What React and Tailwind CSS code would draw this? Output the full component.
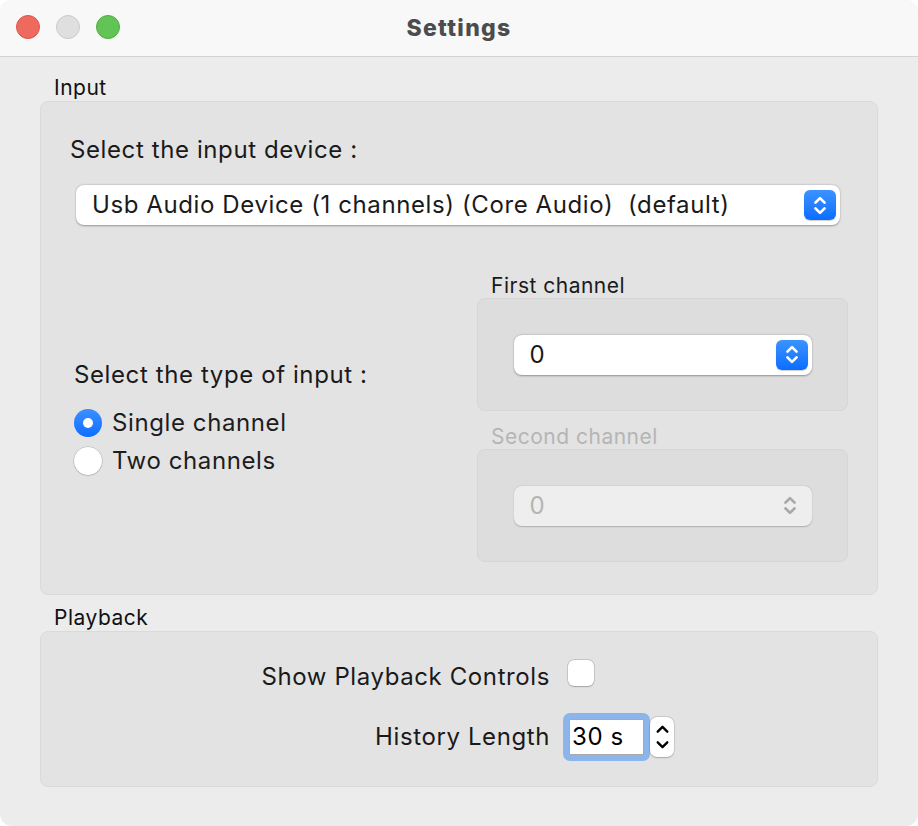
import { useState } from 'react'

const font = { fontFamily: 'Inter, "Noto Sans", sans-serif' }

function Chevrons({ className = '' }) {
  return (
    <svg viewBox="0 0 14 22" className={className} fill="none" stroke="currentColor" strokeWidth="2.4" strokeLinecap="round" strokeLinejoin="round">
      <path d="M3 8.5 L7 4.5 L11 8.5" />
      <path d="M3 13.5 L7 17.5 L11 13.5" />
    </svg>
  )
}

function PopUp({ value, width, disabled = false }) {
  if (disabled) {
    return (
      <div className={`flex h-[40px] ${width} items-center justify-between rounded-[8px] bg-[#eeeeee] pl-[16px] pr-[6px] shadow-[0_0.5px_1.5px_rgba(0,0,0,0.22)]`}>
        <span className="text-[24px] tracking-[0.6px] text-[#b4b4b4]">{value}</span>
        <div className="flex h-[30px] w-[32px] items-center justify-center text-[#a8a8a8]">
          <Chevrons className="h-[25px] w-[16px]" />
        </div>
      </div>
    )
  }
  return (
    <div className={`flex h-[40px] ${width} items-center justify-between rounded-[8px] bg-white pl-[16px] pr-[4px] shadow-[0_0.5px_2px_rgba(0,0,0,0.35)]`}>
      <span className="whitespace-pre text-[24px] tracking-[0.6px] text-[#1a1a1a]">{value}</span>
      <div className="flex h-[30px] w-[32px] items-center justify-center rounded-[6px] bg-gradient-to-b from-[#3b93ff] to-[#0a6dff] text-white shadow-[0_0.5px_1px_rgba(0,0,0,0.2)]">
        <Chevrons className="h-[25px] w-[16px]" />
      </div>
    </div>
  )
}

function Radio({ checked, label, onClick }) {
  return (
    <button type="button" onClick={onClick} className="flex h-[38px] items-center gap-[10px] text-left">
      {checked ? (
        <span className="flex h-[28px] w-[28px] items-center justify-center rounded-full bg-gradient-to-b from-[#3a90ff] to-[#0a6dff]">
          <span className="h-[10px] w-[10px] rounded-full bg-white" />
        </span>
      ) : (
        <span className="h-[28px] w-[28px] rounded-full bg-white shadow-[0_0_0_0.5px_rgba(0,0,0,0.18),0_0.5px_1.5px_rgba(0,0,0,0.2)]" />
      )}
      <span className="text-[24px] tracking-[0.6px] text-[#1d1d1d]">{label}</span>
    </button>
  )
}

function ChannelBox({ label, value, disabled }) {
  return (
    <div>
      <div className={`pl-[14px] text-[21px] leading-[24px] tracking-[0.5px] ${disabled ? 'text-[#b5b5b5]' : 'text-[#1a1a1a]'}`}>{label}</div>
      <div className="flex h-[113px] items-center justify-center rounded-[8px] border border-[#d6d6d6] bg-[#dddddd]">
        <PopUp value={value} width="w-[298px]" disabled={disabled} />
      </div>
    </div>
  )
}

export default function App() {
  const [mode, setMode] = useState('single')

  return (
    <div className="h-[826px] w-[918px] bg-white" style={font}>
      <div className="flex h-full w-full flex-col overflow-hidden rounded-[12px] bg-[#ececec]">
        <div className="relative flex h-[57px] shrink-0 items-center justify-center border-b border-[#d2d2d2] bg-[#f7f8f7]">
          <div className="absolute left-[16px] top-[15px] flex gap-[16px]">
            <span className="h-[24px] w-[24px] rounded-full border border-[#dc5448] bg-[#ee6a5f]" />
            <span className="h-[24px] w-[24px] rounded-full border border-[#c9c9c9] bg-[#dedfde]" />
            <span className="h-[24px] w-[24px] rounded-full border border-[#4fae42] bg-[#61c454]" />
          </div>
          <span className="text-[23px] font-extrabold tracking-[1.3px] text-[#4c4c4c]">Settings</span>
        </div>

        <div className="px-[40px] pt-[18px]">
          <div className="pl-[14px] text-[21px] leading-[26px] tracking-[0.5px] text-[#111]">Input</div>
          <div className="h-[494px] rounded-[8px] border border-[#dadada] bg-[#e3e3e3]">
            <div className="pl-[29px] pt-[33px] text-[24px] leading-[30px] tracking-[0.6px] text-[#1a1a1a]">Select the input device :</div>
            <div className="mt-[20px] pl-[35px]">
              <PopUp value="Usb Audio Device (1 channels) (Core Audio)  (default)" width="w-[764px]" />
            </div>
            <div className="mt-[49px] flex items-start pr-[29px]">
              <div className="flex-1 pl-[33px] pt-[86px]">
                <div className="mb-[14px] text-[24px] leading-[30px] tracking-[0.6px] text-[#1a1a1a]">Select the type of input :</div>
                <Radio checked={mode === 'single'} label="Single channel" onClick={() => setMode('single')} />
                <Radio checked={mode === 'two'} label="Two channels" onClick={() => setMode('two')} />
              </div>
              <div className="flex w-[371px] flex-col gap-[14px]">
                <ChannelBox label="First channel" value="0" />
                <ChannelBox label="Second channel" value="0" disabled={mode !== 'two'} />
              </div>
            </div>
          </div>

          <div className="mt-[10px] pl-[14px] text-[21px] leading-[26px] tracking-[0.5px] text-[#111]">Playback</div>
          <div className="grid h-[156px] grid-cols-[509px_1fr] content-center items-center gap-y-[18px] rounded-[8px] border border-[#dadada] bg-[#e3e3e3] pt-[2px]">
            <span className="text-right text-[24px] tracking-[0.6px] text-[#1a1a1a]">Show Playback Controls</span>
            <div className="pl-[18px]">
              <span className="block h-[26px] w-[26px] -translate-y-[4px] rounded-[6px] bg-white shadow-[0_0_0_0.5px_rgba(0,0,0,0.2),0_0.5px_1.5px_rgba(0,0,0,0.2)]" />
            </div>
            <span className="text-right text-[24px] tracking-[0.6px] text-[#1a1a1a]">History Length</span>
            <div className="flex items-center pl-[13px]">
              <div className="rounded-[7px] bg-[#8cb5ec] p-[6px]">
                <div className="flex h-[36px] w-[75px] items-center border border-[#a9a9a9] bg-white px-[2px] text-[24px] tracking-[0.6px] text-black">30 s</div>
              </div>
              <div className="flex h-[40px] w-[24px] flex-col items-center justify-center rounded-[7px] bg-white text-black shadow-[0_0_0_0.5px_rgba(0,0,0,0.15),0_0.5px_1.5px_rgba(0,0,0,0.2)]">
                <svg viewBox="0 0 14 30" className="h-[32px] w-[15px]" fill="none" stroke="currentColor" strokeWidth="2.2" strokeLinecap="round" strokeLinejoin="round">
                  <path d="M2.5 10 L7 5.5 L11.5 10" />
                  <path d="M2.5 20 L7 24.5 L11.5 20" />
                </svg>
              </div>
            </div>
          </div>
        </div>
      </div>
    </div>
  )
}
